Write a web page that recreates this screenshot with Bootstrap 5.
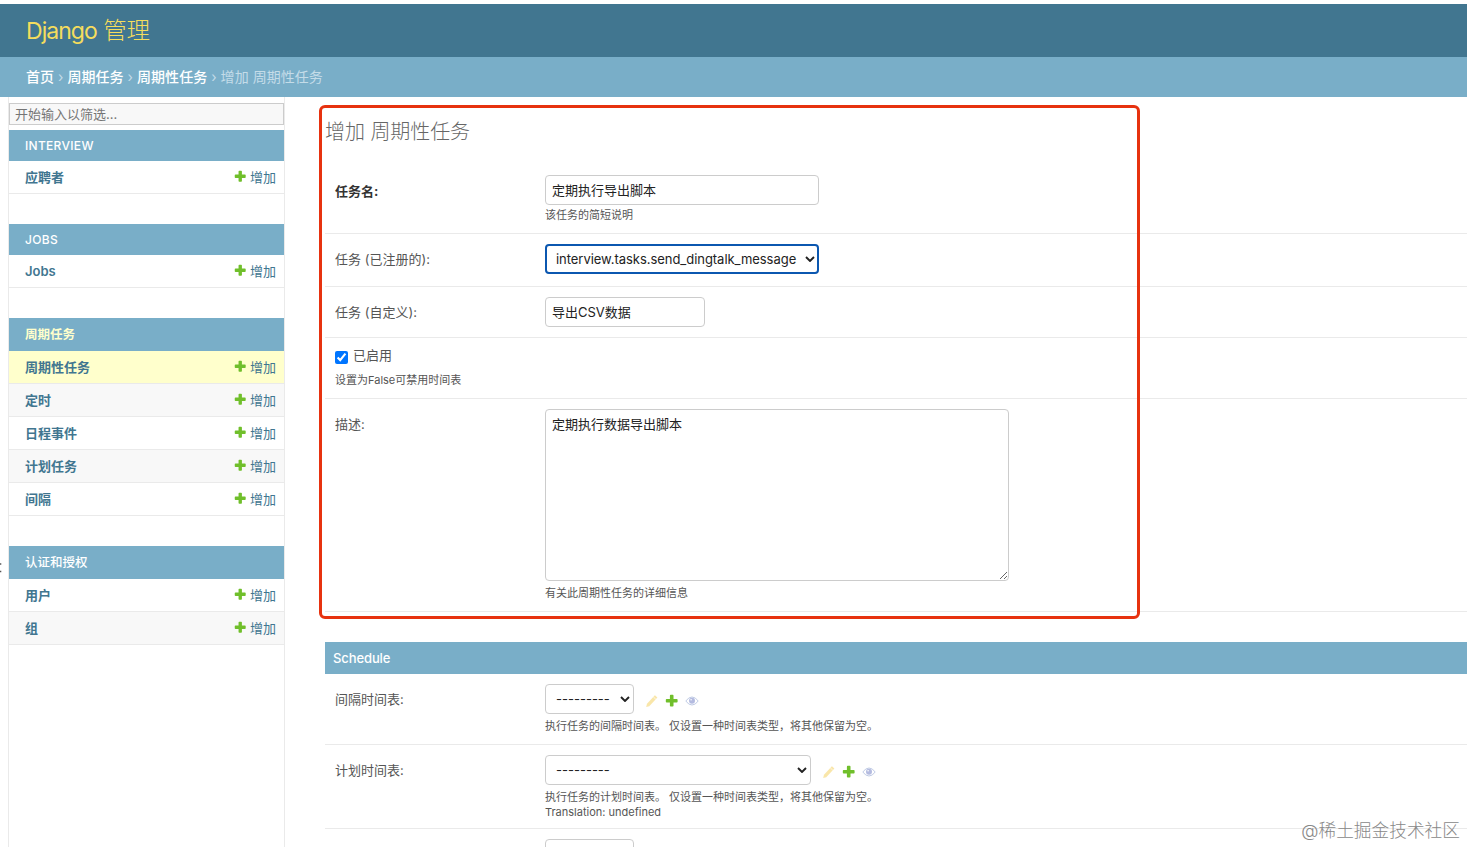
<!DOCTYPE html>
<html lang="zh-CN">
<head>
<meta charset="utf-8">
<meta name="viewport" content="width=device-width, initial-scale=1">
<title>增加 周期性任务 | Django 管理</title>
<link href="https://cdn.jsdelivr.net/npm/bootstrap@5.3.0/dist/css/bootstrap.min.css" rel="stylesheet">
<style>
  body { font-family: Inter, "Noto Sans CJK SC", sans-serif; font-size: 13px; line-height: 20px; color: #333; background: #fff; height: 847px; overflow: hidden; padding-top: 4px; }
  a { color: #417690; text-decoration: none; }
  .site-header { height: 53px; background: #417690; padding: 0 26px; }
  .site-header a { color: #f5dd5d; font-size: 23.5px; font-weight: 300; letter-spacing: -.2px; line-height: 53px; }
  .site-header .latin-part { font-weight: 400; font-size: 23px; letter-spacing: -.95px; }
  .crumbs { height: 40px; background: #79aec8; color: #c4dce8; font-size: 14px; padding: 0 26px; white-space: pre; letter-spacing: .04px; }
  .crumbs a { color: #fff; font-weight: 500; }
  .page-body { height: 750px; }
  .toggle-strip { width: 8px; }
  .toggle-strip svg { margin-top: 465px; display: block; }
  .side-nav { width: 277px; border: 1px solid #eaeaea; border-width: 0 1px; padding-top: 6px; }
  .side-nav .filter { height: 22px; border: 1px solid #ccc; border-radius: 0; background: #f8f8f8; padding: 0 5px; font-size: 13px; color: #666; margin-bottom: 5px; }
  .filter::placeholder { color: #757575; }
  .module { margin-bottom: 30px; }
  .module-title { height: 33px; background: #79aec8; color: #fff; font-size: 12.5px; font-weight: 500; padding: 0 16px; }
  .module-title.latin { height: 31px; font-size: 12px; letter-spacing: .3px; }
  .module-title.current { color: #ffc; font-weight: 700; }
  .nav-line { height: 33px; border-bottom: 1px solid #eaeaea; padding: 0 8px 0 16px; }
  .nav-line:nth-child(odd) { background: #f8f8f8; }
  .nav-line.current { background: #ffc; }
  .nav-line .name { font-weight: 600; }
  .nav-line svg { margin-right: 3px; margin-top: -1px; }
  .content { margin-left: 40px; }
  .page-title { font-size: 20px; font-weight: 300; color: #666; height: 68px; line-height: 30px; padding-top: 20px; margin: 0; letter-spacing: -.08px; }
  .form-line { border-bottom: 1px solid #eaeaea; padding: 10px; color: #555; }
  .form-line > label { width: 210px; line-height: 20px; padding-top: 5px; color: #555; }
  .form-line > label.required { color: #333; font-weight: 700; padding-top: 6px; }
  .form-line.check-line { padding-top: 7px; }
  .check-line .note { margin-top: 8px; }
  .ctl { display: block; height: 30px; border: 1px solid #ccc; border-radius: 4px; padding: 0 6px; font-size: 13px; color: #222; background-color: #fff; outline: 0; }
  input.ctl { padding-bottom: 2px; }
  select.ctl { appearance: none; padding: 0 18px 0 10px; background: #fff url("data:image/svg+xml,%3Csvg xmlns='http://www.w3.org/2000/svg' width='10' height='6'%3E%3Cpath d='M1 1l4 4 4-4' fill='none' stroke='%23222' stroke-width='1.9'/%3E%3C/svg%3E") no-repeat right 3px center; }
  select.ctl.focused { border: 2px solid #0b57b0; padding-left: 9px; background-position: right 2px center; letter-spacing: -.04px; }
  textarea.ctl { height: 172px; width: 464px; padding: 4px 6px; line-height: 20px; resize: both; }
  .note { font-size: 11px; line-height: 15px; color: #555; }
  .note-wide { margin-top: 5px; }
  .set-title { background: #79aec8; color: #fff; height: 32px; font-weight: 500; padding: 1px 8px 0; margin-top: 30px; font-size: 13px; letter-spacing: -.1px; }
  .related { gap: 6px; padding-left: 11px; padding-top: 3px; }
  .related .off { opacity: .35; }
  .marker { left: -6px; top: 8px; width: 821px; height: 514px; border: 3px solid #e7320f; border-radius: 6px; pointer-events: none; }
  .enabled-box { width: 13px; height: 13px; margin: 6px 5px 0 0; }
  .watermark { right: 7px; bottom: 3px; font-size: 17.7px; line-height: 26px; font-weight: 300; color: #888; }
</style>
</head>
<body class="position-relative">
<svg class="d-none">
  <symbol id="plus" viewBox="0 0 12 12"><path d="M4.200 1.400q0-.7.7-.7h1.700q.7 0 .7.7v2.800h2.800q.7 0 .7.7v1.700q0 .7-.7.7H7.300v2.800q0 .7-.7.7H4.900q-.7 0-.7-.7V7.300H1.400q-.7 0-.7-.7V4.900q0-.7.7-.7h2.800z" fill="#70bf2b"/></symbol>
  <symbol id="pencil" viewBox="0 0 14 14"><path d="M9.900 1.300l2.500 2.200-8.200 8.700L1.200 13l.8-3.200z" fill="#efb80b"/><path d="M8.300 2.900l2.500 2.300" stroke="#fff" stroke-width=".7"/></symbol>
  <symbol id="eye" viewBox="0 0 14 14"><path d="M.8 7Q3.600 3 7 3t6.200 4Q10.400 11 7 11T.8 7z" fill="none" stroke="#4a6ab5" stroke-width="1"/><circle cx="7" cy="6.700" r="3" fill="#2b40a8"/><circle cx="6.100" cy="5.700" r=".8" fill="#fff"/></symbol>
</svg>

<header class="site-header d-flex align-items-center"><a href="#"><span class="latin-part">Django</span> 管理</a></header>
<nav class="crumbs d-flex align-items-center"><a href="#">首页</a> › <a href="#">周期任务</a> › <a href="#">周期性任务</a> › 增加 周期性任务</nav>

<div class="page-body d-flex">
  <div class="toggle-strip flex-shrink-0"><svg width="8" height="12"><path d="M0 2h1.300M0 9.500h1.300" stroke="#555" stroke-width="1.500"/></svg></div>
  <aside class="side-nav flex-shrink-0">
    <input class="filter d-block w-100" type="search" placeholder="开始输入以筛选...">
    <section class="module">
      <div class="module-title latin d-flex align-items-center">INTERVIEW</div>
      <div class="nav-line d-flex align-items-center"><a class="name me-auto" href="#">应聘者</a><svg width="13" height="13"><use href="#plus"/></svg><a href="#">增加</a></div>
    </section>
    <section class="module">
      <div class="module-title latin d-flex align-items-center">JOBS</div>
      <div class="nav-line d-flex align-items-center"><a class="name me-auto" href="#">Jobs</a><svg width="13" height="13"><use href="#plus"/></svg><a href="#">增加</a></div>
    </section>
    <section class="module">
      <div class="module-title current d-flex align-items-center">周期任务</div>
      <div class="nav-line current d-flex align-items-center"><a class="name me-auto" href="#">周期性任务</a><svg width="13" height="13"><use href="#plus"/></svg><a href="#">增加</a></div>
      <div class="nav-line d-flex align-items-center"><a class="name me-auto" href="#">定时</a><svg width="13" height="13"><use href="#plus"/></svg><a href="#">增加</a></div>
      <div class="nav-line d-flex align-items-center"><a class="name me-auto" href="#">日程事件</a><svg width="13" height="13"><use href="#plus"/></svg><a href="#">增加</a></div>
      <div class="nav-line d-flex align-items-center"><a class="name me-auto" href="#">计划任务</a><svg width="13" height="13"><use href="#plus"/></svg><a href="#">增加</a></div>
      <div class="nav-line d-flex align-items-center"><a class="name me-auto" href="#">间隔</a><svg width="13" height="13"><use href="#plus"/></svg><a href="#">增加</a></div>
    </section>
    <section class="module">
      <div class="module-title d-flex align-items-center">认证和授权</div>
      <div class="nav-line d-flex align-items-center"><a class="name me-auto" href="#">用户</a><svg width="13" height="13"><use href="#plus"/></svg><a href="#">增加</a></div>
      <div class="nav-line d-flex align-items-center"><a class="name me-auto" href="#">组</a><svg width="13" height="13"><use href="#plus"/></svg><a href="#">增加</a></div>
    </section>
  </aside>

  <main class="content flex-grow-1 position-relative">
    <h1 class="page-title">增加 周期性任务</h1>
    <div class="form-line d-flex" style="height:69px">
      <label class="required" for="name">任务名:</label>
      <div><input id="name" class="ctl" style="width:274px" value="定期执行导出脚本"><div class="note mt-1 lh-sm">该任务的简短说明</div></div>
    </div>
    <div class="form-line d-flex" style="height:53px">
      <label for="regtask">任务 (已注册的):</label>
      <select id="regtask" class="ctl focused" style="width:274px"><option>interview.tasks.send_dingtalk_message</option></select>
    </div>
    <div class="form-line d-flex" style="height:51px">
      <label for="task">任务 (自定义):</label>
      <input id="task" class="ctl" style="width:160px" value="导出CSV数据">
    </div>
    <div class="form-line check-line" style="height:61px">
      <div class="d-flex"><input id="enabled" class="enabled-box" type="checkbox" checked><label for="enabled">已启用</label></div>
      <div class="note">设置为False可禁用时间表</div>
    </div>
    <div class="form-line d-flex" style="height:213px">
      <label for="desc">描述:</label>
      <div><textarea id="desc" class="ctl">定期执行数据导出脚本</textarea><div class="note note-wide">有关此周期性任务的详细信息</div></div>
    </div>
    <h2 class="set-title d-flex align-items-center mb-0">Schedule</h2>
    <div class="form-line d-flex" style="height:71px">
      <label for="interval">间隔时间表:</label>
      <div>
        <div class="d-flex align-items-center"><select id="interval" class="ctl" style="width:89px"><option>---------</option></select>
          <div class="related d-flex"><svg class="off" width="14" height="14"><use href="#pencil"/></svg><svg width="14" height="14"><use href="#plus"/></svg><svg class="off" width="14" height="14"><use href="#eye"/></svg></div></div>
        <div class="note note-wide">执行任务的间隔时间表。 仅设置一种时间表类型，将其他保留为空。</div>
      </div>
    </div>
    <div class="form-line d-flex" style="height:84px">
      <label for="crontab">计划时间表:</label>
      <div>
        <div class="d-flex align-items-center"><select id="crontab" class="ctl" style="width:266px"><option>---------</option></select>
          <div class="related d-flex"><svg class="off" width="14" height="14"><use href="#pencil"/></svg><svg width="14" height="14"><use href="#plus"/></svg><svg class="off" width="14" height="14"><use href="#eye"/></svg></div></div>
        <div class="note note-wide">执行任务的计划时间表。 仅设置一种时间表类型，将其他保留为空。<br>Translation: undefined</div>
      </div>
    </div>
    <div class="form-line d-flex">
      <label></label>
      <select class="ctl" style="width:89px"><option>---------</option></select>
    </div>
    <div class="marker position-absolute"></div>
  </main>
</div>
<div class="watermark position-absolute">@稀土掘金技术社区</div>
<script src="https://cdn.jsdelivr.net/npm/bootstrap@5.3.0/dist/js/bootstrap.bundle.min.js"></script>
</body>
</html>
